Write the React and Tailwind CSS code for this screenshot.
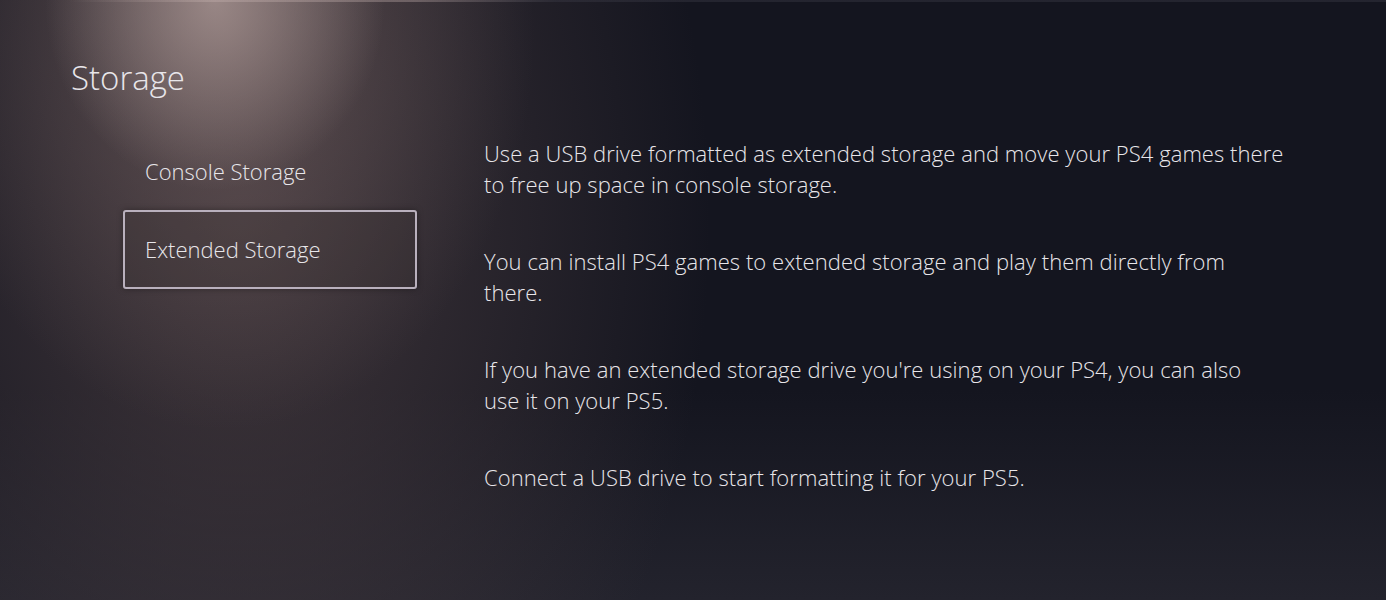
import React from 'react';

const paragraphs = [
  ['Use a USB drive formatted as extended storage and move your PS4 games there', 'to free up space in console storage.'],
  ['You can install PS4 games to extended storage and play them directly from', 'there.'],
  ["If you have an extended storage drive you're using on your PS4, you can also", 'use it on your PS5.'],
  ['Connect a USB drive to start formatting it for your PS5.'],
];

export default function App() {
  return (
    <div
      className="relative w-full h-[600px] overflow-hidden text-[#e8e6ea] font-light bg-[#14151f] bg-[radial-gradient(ellipse_170px_190px_at_215px_0px,rgba(180,160,157,0.7),transparent),radial-gradient(ellipse_310px_400px_at_225px_30px,rgba(125,105,104,0.55),transparent),radial-gradient(ellipse_470px_720px_at_240px_220px,rgba(72,60,64,0.85),transparent),linear-gradient(to_bottom,#14151f_65%,#23232d)]"
      style={{ fontFamily: '"Open Sans", "Noto Sans", sans-serif' }}
    >
      {/* top hairline */}
      <div className="h-[2px] bg-[linear-gradient(to_right,transparent_5%,rgba(200,180,178,0.35)_15%,rgba(200,180,178,0.35)_30%,rgba(60,60,72,0.4)_40%,rgba(60,60,72,0.4))]" />

      <h1 className="pl-[71px] pt-[56px] text-[33px] leading-[40px]">Storage</h1>

      <div className="flex mt-[35px]">
        <nav className="ml-[123px] w-[294px] flex flex-col">
          <div className="h-[77px] flex items-center pl-[22px] text-[22px]">Console Storage</div>
          <div className="h-[79px] flex items-center pl-[20px] text-[22px] border-2 border-[#b9b0bd] rounded-[3px] bg-[rgba(60,50,52,0.25)] shadow-[0_0_6px_rgba(0,0,0,0.35)]">
            Extended Storage
          </div>
        </nav>

        <div className="ml-[67px] w-[840px] pt-[5px] flex flex-col gap-[46px]">
          {paragraphs.map((lines, i) => (
            <p key={i} className="text-[22px] leading-[31px] tracking-[0.05px]">
              {lines.map((l, j) => (
                <span key={j} className="block whitespace-nowrap">{l}</span>
              ))}
            </p>
          ))}
        </div>
      </div>
    </div>
  );
}
